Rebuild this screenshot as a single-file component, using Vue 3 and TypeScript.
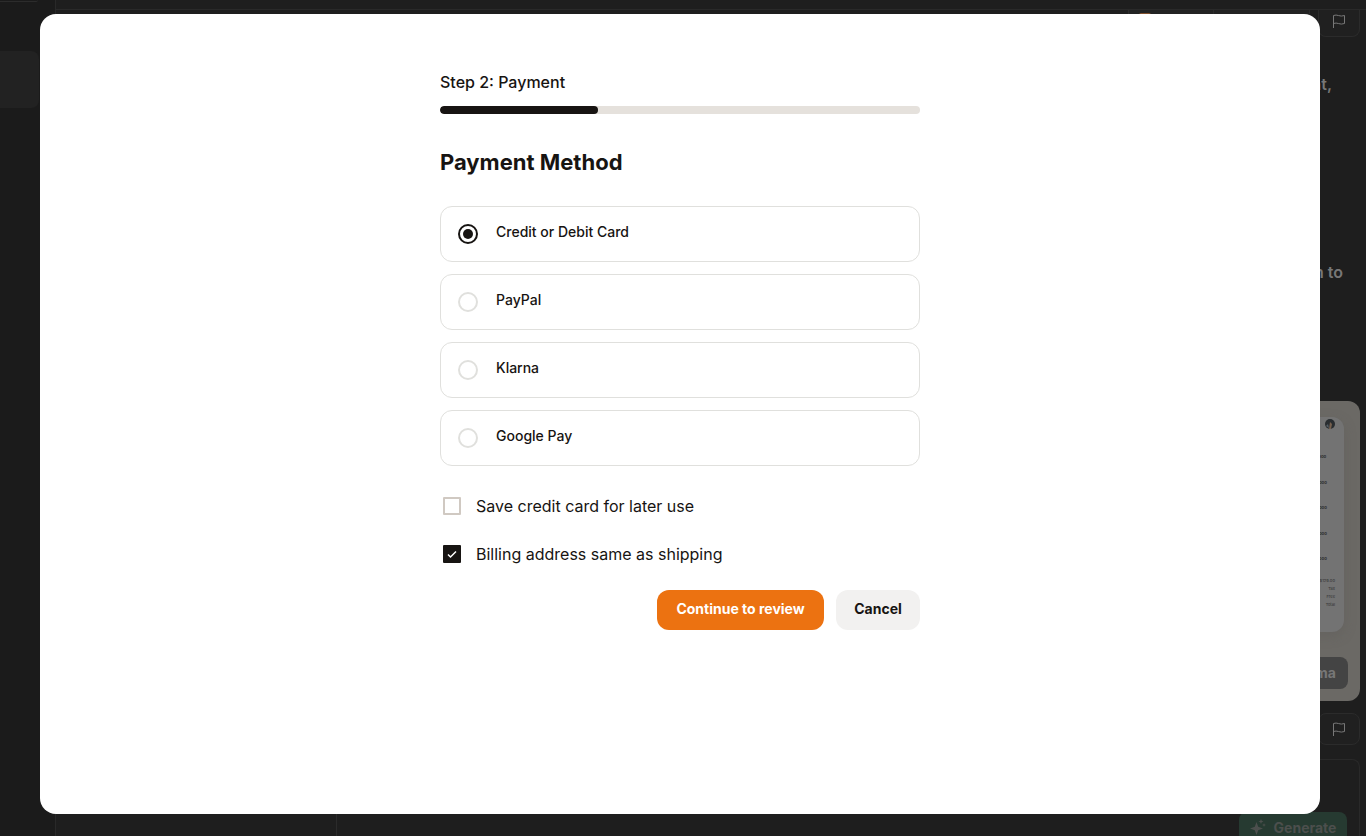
<script setup lang="ts">
import { ref } from 'vue'

const methods = ['Credit or Debit Card', 'PayPal', 'Klarna', 'Google Pay']
const selected = ref(methods[0])
const saveCard = ref(false)
const sameAddress = ref(true)
const progress = 33
const prices = ['17,000', '21,000', '12,000', '18,000', '16,000']
const totals = ['$129.00', 'Tax', 'Free', 'Total']
</script>

<template>
  <div class="page">
    <div class="backdrop" aria-hidden="true">
      <div class="rail">
        <div class="rail-top"></div>
        <div class="rail-item"></div>
      </div>
      <div class="workspace">
        <div class="side"></div>
        <div class="feed">
          <div class="tools">
            <div class="tool-group">
              <span class="tool"><i class="mark"></i></span>
              <span class="tool"></span>
            </div>
            <div class="flag top-flag">
              <svg viewBox="0 0 16 16" width="16" height="16"><path d="M2.500 15V2.500C6 .8 9 4.400 13.500 2.500V10.500C9 12.400 6 8.800 2.500 10.500" /></svg>
            </div>
          </div>
          <p class="message first">nt,</p>
          <p class="message second">n to</p>
          <div class="preview">
            <div class="sheet">
              <svg class="avatar" viewBox="0 0 10 10" width="10" height="10"><circle cx="5" cy="5" r="5" fill="#292d30" /><path d="M5 3L7 5 6 10H4Z" fill="#76604e" /><path d="M1 7L3 5 4 9Z" fill="#555f65" /></svg>
              <div class="prices"><span v-for="price in prices" :key="price">{{ price }}</span></div>
              <div class="totals"><span v-for="total in totals" :key="total">{{ total }}</span></div>
            </div>
            <div class="figma">Figma</div>
          </div>
          <div class="flag">
            <svg viewBox="0 0 16 16" width="16" height="16"><path d="M2.500 15V2.500C6 .8 9 4.400 13.500 2.500V10.500C9 12.400 6 8.800 2.500 10.500" /></svg>
          </div>
          <div class="composer">
            <div class="generate">
              <svg viewBox="0 0 16 16" width="16" height="16"><path d="M6.500 3L8.200 7.800 13 9.500 8.200 11.200 6.500 16 4.800 11.200 0 9.500 4.800 7.800ZM11 0L11.700 1.800 13.500 2.500 11.700 3.200 11 5 10.300 3.200 8.500 2.500 10.300 1.800ZM14 4L14.500 5.500 16 6 14.500 6.500 14 8 13.500 6.500 12 6 13.500 5.500Z" /></svg>
              Generate
            </div>
          </div>
        </div>
      </div>
    </div>

    <main class="dialog" role="dialog" aria-labelledby="title">
      <form class="checkout" @submit.prevent>
        <p id="step" class="step">Step 2: Payment</p>
        <div class="track" role="progressbar" aria-labelledby="step" :aria-valuenow="progress">
          <div class="fill" :style="{ width: progress + '%' }"></div>
        </div>
        <h1 id="title">Payment Method</h1>
        <div class="methods" role="radiogroup" aria-labelledby="title">
          <label v-for="method in methods" :key="method" class="method">
            <input v-model="selected" type="radio" name="method" :value="method" />
            <span>{{ method }}</span>
          </label>
        </div>
        <div class="options">
          <label class="option">
            <input v-model="saveCard" type="checkbox" />
            <span class="box"></span>
            <span>Save credit card for later use</span>
          </label>
          <label class="option">
            <input v-model="sameAddress" type="checkbox" />
            <span class="box"><svg viewBox="0 0 18 18" width="18" height="18"><path d="M5 9.500L7.500 12 13 6.500" /></svg></span>
            <span>Billing address same as shipping</span>
          </label>
        </div>
        <div class="actions">
          <button class="primary" type="submit">Continue to review</button>
          <button class="secondary" type="button">Cancel</button>
        </div>
      </form>
    </main>
  </div>
</template>

<style>
body { margin: 0; background: #1e1e1e; }
</style>

<style scoped>
* { box-sizing: border-box; }
.page {
  position: relative;
  min-height: 100vh;
  display: flex;
  padding: 14px 46px 22px 40px;
  overflow: hidden;
  font-family: Inter, "Liberation Sans", sans-serif;
}
.backdrop {
  position: absolute;
  inset: 0;
  display: flex;
  color: #777;
  background: #1e1e1e;
}
.rail { width: 56px; background: #1b1b1b; border-right: 1px solid #292929; }
.rail-top { width: 38px; height: 2px; border-bottom: 1px solid #2c2c2c; border-radius: 0 0 8px 0; }
.rail-item { width: 39px; height: 57px; margin-top: 49px; border-radius: 0 8px 8px 0; background: #222; }
.workspace { flex: 1; display: flex; margin-top: 9px; border-top: 1px solid #292929; }
.side { width: 281px; margin-top: 27px; border-right: 1px solid #2b2b2b; }
.feed { flex: 1; display: flex; flex-direction: column; align-items: flex-end; padding-right: 6px; }
.tools { display: flex; gap: 8px; height: 27px; }
.tool-group { display: flex; width: 182px; border: 1px solid #2b2b2b; border-top: 0; border-radius: 0 0 8px 8px; background: #222; }
.tool { width: 84px; padding: 3px 10px; }
.tool + .tool { flex: 1; border-left: 1px solid #2b2b2b; }
.mark { display: block; width: 12px; height: 12px; border-radius: 2px; background: #81502d; }
.flag { display: grid; place-items: center; flex: none; width: 42px; height: 32px; border: 1px solid #2b2b2b; border-radius: 8px; background: #202020; }
.top-flag { height: 27px; padding-bottom: 5px; border-top: 0; border-radius: 0 0 8px 8px; }
.flag svg { fill: none; stroke: #777; stroke-width: 1; }
.message { margin: 0; font-size: 16px; font-weight: 600; line-height: 24px; }
.first { margin: 35px 28px 0 0; }
.second { margin: 164px 17px 0 0; }
.preview { display: flex; flex-direction: column; align-items: flex-end; flex: none; width: 480px; height: 300px; margin: 117px 0 12px; padding: 16px 12px 12px; border-radius: 12px; background: #6b6965; }
.sheet { display: flex; flex-direction: column; align-items: flex-end; width: 400px; height: 215px; margin: 0 4px 25px 0; padding: 2px 9px; border-radius: 12px; background: #737373; box-shadow: 0 4px 12px #5c5a5766; font-size: 4px; font-weight: 700; color: #292929; }
.prices { display: flex; flex-direction: column; justify-content: space-between; height: 108px; margin: 25px 8px 16px 0; line-height: 6px; }
.totals { display: flex; flex-direction: column; align-items: flex-end; gap: 2px; line-height: 6px; font-weight: 500; color: #3c3c3c; }
.figma { padding: 0 12px; border-radius: 8px; color: #777; background: #444; font-size: 14px; font-weight: 700; line-height: 32px; }
.composer { display: flex; flex: 1; justify-content: flex-end; align-items: flex-start; width: 980px; margin-top: 14px; padding: 52px 12px 0; border: 1px solid #292929; border-width: 1px 1px 0 0; border-radius: 0 8px 0 0; }
.generate { display: flex; align-items: center; justify-content: center; gap: 8px; width: 108px; height: 32px; padding-bottom: 2px; border-radius: 8px; color: #4c4f4d; background: #263a31; font-size: 14px; font-weight: 700; }
.generate svg { fill: #4c4f4d; }

.dialog { position: relative; flex: 1; padding: 56px 24px; border-radius: 16px; background: #fff; color: #171412; }
.checkout { max-width: 480px; margin: 0 auto; }
.step { margin: 0 0 12px; font-size: 16px; font-weight: 500; line-height: 24px; }
.track { height: 8px; border-radius: 4px; background: #e5e1dc; overflow: hidden; }
.fill { height: 8px; border-radius: 4px; background: #171412; }
h1 { margin: 32px 0 28px; font-size: 22px; font-weight: 700; line-height: 32px; }
.methods { display: grid; gap: 12px; }
.method { display: flex; align-items: center; gap: 18px; height: 56px; padding: 0 17px; border: 1px solid #e0e0dd; border-radius: 12px; font-size: 14px; font-weight: 500; line-height: 20px; cursor: pointer; }
.method span { padding-bottom: 4px; }
.method input { appearance: none; display: grid; place-items: center; flex: none; width: 20px; height: 20px; margin: 0; border: 2px solid #e0e0dd; border-radius: 50%; }
.method input:checked { border-color: #171412; }
.method input:checked::before { content: ""; width: 10px; height: 10px; border-radius: 50%; background: #171412; }
.options { display: grid; gap: 24px; margin: 28px 0 24px; }
.option { position: relative; display: flex; align-items: center; gap: 15px; padding-left: 3px; font-size: 16px; line-height: 24px; cursor: pointer; }
.option input { position: absolute; width: 18px; height: 18px; margin: 0; opacity: 0; }
.box { flex: none; width: 18px; height: 18px; border: 2px solid #d0c9c2; border-radius: 1px; }
.box svg { display: block; fill: none; stroke: #fff; stroke-width: 1.500; }
.option input:checked + .box { border: 0; background: #171412; }
.actions { display: flex; justify-content: flex-end; gap: 12px; }
button { height: 40px; padding: 0 16px 2px; border: 0; border-radius: 12px; font-family: inherit; font-size: 14px; font-weight: 700; line-height: 20px; cursor: pointer; }
.primary { min-width: 167px; background: #ec7211; color: #fff; }
.secondary { min-width: 84px; background: #f2f1f0; color: #171412; }
</style>
